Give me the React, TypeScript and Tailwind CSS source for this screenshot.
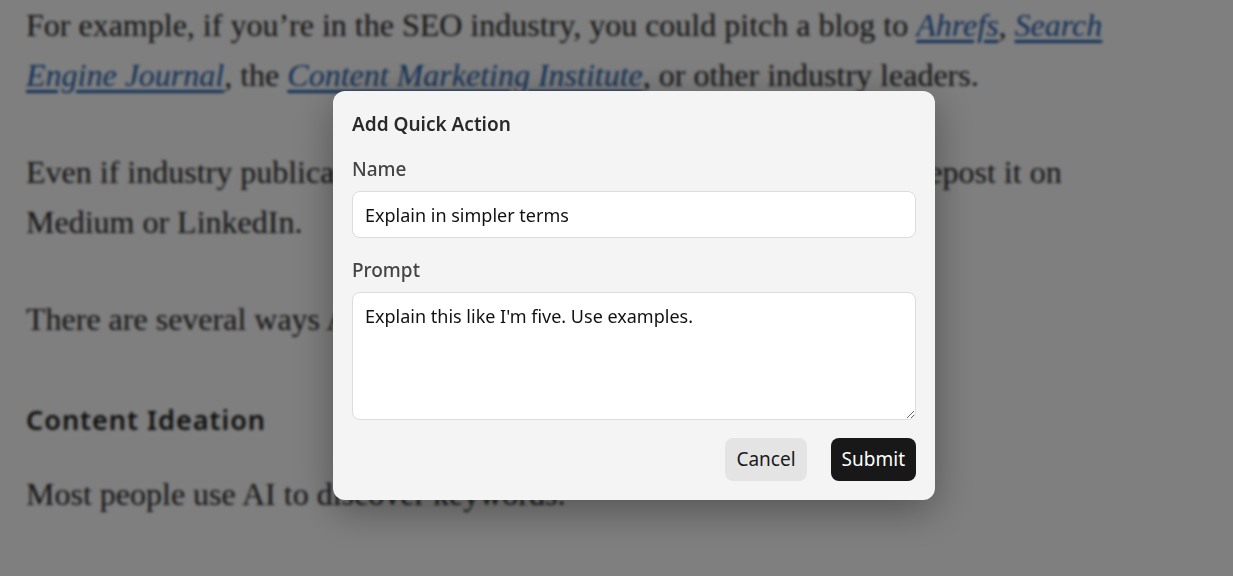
import React from 'react';

const serif = { fontFamily: '"Liberation Serif", "DejaVu Serif", serif' };
const ui = { fontFamily: '"Noto Sans", "Open Sans", sans-serif' };

function Article() {
    return (
        <div className="px-[26px] text-[#262626] text-[32px]" style={serif}>
            <p className="leading-[50px]">
                <span className="block whitespace-nowrap">
                    For example, if you’re in the SEO industry, you could pitch a blog to{' '}
                    <a className="italic text-[#1f5fb0] underline underline-offset-4">Ahrefs</a>,{' '}
                    <a className="italic text-[#1f5fb0] underline underline-offset-4">Search</a>
                </span>
                <span className="block whitespace-nowrap">
                    <a className="italic text-[#1f5fb0] underline underline-offset-4">Engine Journal</a>, the{' '}
                    <a className="italic text-[#1f5fb0] underline underline-offset-4">Content Marketing Institute</a>, or other industry leaders.
                </span>
            </p>
            <p className="leading-[50px] mt-[47px]">
                <span className="block whitespace-nowrap">Even if industry publications won’t accept your content, you can still repost it on</span>
                <span className="block whitespace-nowrap">Medium or LinkedIn.</span>
            </p>
            <p className="leading-[50px] mt-[47px] whitespace-nowrap">There are several ways AI can help you with content marketing.</p>
            <h2 className="mt-[60px] text-[27px] tracking-[1px] font-semibold leading-[32px] text-[#1a1a1a]" style={{ fontFamily: '"Noto Sans", Lato, sans-serif' }}>
                Content Ideation
            </h2>
            <p className="leading-[50px] mt-[33px] whitespace-nowrap">Most people use AI to discover keywords.</p>
        </div>
    );
}

export default function App() {
    return (
        <div className="relative w-[1233px] h-[576px] overflow-hidden bg-white">
            <Article />
            <div className="absolute inset-0 bg-black/50 backdrop-blur-[1.5px] flex items-start justify-start pl-[333px] pt-[91px]">
                <div className="w-[602px] bg-[#f4f4f4] rounded-xl shadow-[0_10px_40px_rgba(0,0,0,0.35)] px-[19px] pt-[19px] pb-[19px] text-[19px]" style={ui}>
                    <h3 className="font-semibold text-[#2a2a2a] leading-[28px]">Add Quick Action</h3>
                    <label className="block mt-[18px] font-medium text-[#444] leading-[26px]">Name</label>
                    <input
                        defaultValue="Explain in simpler terms"
                        className="mt-[9px] w-full h-[47px] px-[12px] bg-white border border-[#dcdcdc] rounded-lg text-[18px] text-[#111] outline-none"
                    />
                    <label className="block mt-[19px] font-medium text-[#444] leading-[26px]">Prompt</label>
                    <textarea
                        defaultValue="Explain this like I'm five. Use examples."
                        className="mt-[9px] block w-full h-[128px] px-[12px] py-[10px] bg-white border border-[#dcdcdc] rounded-lg text-[18px] text-[#111] outline-none resize-y"
                    />
                    <div className="mt-[18px] flex justify-end gap-6">
                        <button className="h-[43px] px-[11px] rounded-lg bg-[#e4e4e4] text-[#1a1a1a]">Cancel</button>
                        <button className="h-[43px] px-[11px] rounded-lg bg-[#181818] text-white">Submit</button>
                    </div>
                </div>
            </div>
        </div>
    );
}
